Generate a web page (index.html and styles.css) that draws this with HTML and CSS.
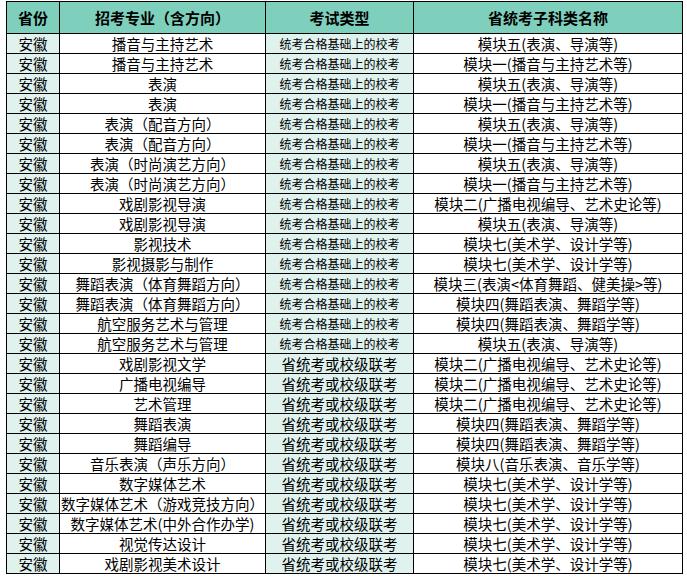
FILE: index.html
```html
<!DOCTYPE html>
<html lang="zh-CN">
<head>
<meta charset="utf-8">
<title>安徽 艺术类专业 省统考子科类</title>
<link rel="stylesheet" href="styles.css">
</head>
<body>
<div class="page">
<table class="grid">
  <colgroup>
    <col class="c-prov">
    <col class="c-major">
    <col class="c-type">
    <col class="c-cat">
  </colgroup>
  <thead>
    <tr><th>省份</th><th>招考专业（含方向）</th><th>考试类型</th><th>省统考子科类名称</th></tr>
  </thead>
  <tbody>
    <tr><td class="prov">安徽</td><td>播音与主持艺术</td><td class="type sm">统考合格基础上的校考</td><td>模块五(表演、导演等)</td></tr>
    <tr><td class="prov">安徽</td><td>播音与主持艺术</td><td class="type sm">统考合格基础上的校考</td><td>模块一(播音与主持艺术等)</td></tr>
    <tr><td class="prov">安徽</td><td>表演</td><td class="type sm">统考合格基础上的校考</td><td>模块五(表演、导演等)</td></tr>
    <tr><td class="prov">安徽</td><td>表演</td><td class="type sm">统考合格基础上的校考</td><td>模块一(播音与主持艺术等)</td></tr>
    <tr><td class="prov">安徽</td><td>表演（配音方向）</td><td class="type sm">统考合格基础上的校考</td><td>模块五(表演、导演等)</td></tr>
    <tr><td class="prov">安徽</td><td>表演（配音方向）</td><td class="type sm">统考合格基础上的校考</td><td>模块一(播音与主持艺术等)</td></tr>
    <tr><td class="prov">安徽</td><td>表演（时尚演艺方向）</td><td class="type sm">统考合格基础上的校考</td><td>模块五(表演、导演等)</td></tr>
    <tr><td class="prov">安徽</td><td>表演（时尚演艺方向）</td><td class="type sm">统考合格基础上的校考</td><td>模块一(播音与主持艺术等)</td></tr>
    <tr><td class="prov">安徽</td><td>戏剧影视导演</td><td class="type sm">统考合格基础上的校考</td><td>模块二(广播电视编导、艺术史论等)</td></tr>
    <tr><td class="prov">安徽</td><td>戏剧影视导演</td><td class="type sm">统考合格基础上的校考</td><td>模块五(表演、导演等)</td></tr>
    <tr><td class="prov">安徽</td><td>影视技术</td><td class="type sm">统考合格基础上的校考</td><td>模块七(美术学、设计学等)</td></tr>
    <tr><td class="prov">安徽</td><td>影视摄影与制作</td><td class="type sm">统考合格基础上的校考</td><td>模块七(美术学、设计学等)</td></tr>
    <tr><td class="prov">安徽</td><td>舞蹈表演（体育舞蹈方向）</td><td class="type sm">统考合格基础上的校考</td><td>模块三(表演&lt;体育舞蹈、健美操&gt;等)</td></tr>
    <tr><td class="prov">安徽</td><td>舞蹈表演（体育舞蹈方向）</td><td class="type sm">统考合格基础上的校考</td><td>模块四(舞蹈表演、舞蹈学等)</td></tr>
    <tr><td class="prov">安徽</td><td>航空服务艺术与管理</td><td class="type sm">统考合格基础上的校考</td><td>模块四(舞蹈表演、舞蹈学等)</td></tr>
    <tr><td class="prov">安徽</td><td>航空服务艺术与管理</td><td class="type sm">统考合格基础上的校考</td><td>模块五(表演、导演等)</td></tr>
    <tr><td class="prov">安徽</td><td>戏剧影视文学</td><td class="type">省统考或校级联考</td><td>模块二(广播电视编导、艺术史论等)</td></tr>
    <tr><td class="prov">安徽</td><td>广播电视编导</td><td class="type">省统考或校级联考</td><td>模块二(广播电视编导、艺术史论等)</td></tr>
    <tr><td class="prov">安徽</td><td>艺术管理</td><td class="type">省统考或校级联考</td><td>模块二(广播电视编导、艺术史论等)</td></tr>
    <tr><td class="prov">安徽</td><td>舞蹈表演</td><td class="type">省统考或校级联考</td><td>模块四(舞蹈表演、舞蹈学等)</td></tr>
    <tr><td class="prov">安徽</td><td>舞蹈编导</td><td class="type">省统考或校级联考</td><td>模块四(舞蹈表演、舞蹈学等)</td></tr>
    <tr><td class="prov">安徽</td><td>音乐表演（声乐方向）</td><td class="type">省统考或校级联考</td><td>模块八(音乐表演、音乐学等)</td></tr>
    <tr><td class="prov">安徽</td><td>数字媒体艺术</td><td class="type">省统考或校级联考</td><td>模块七(美术学、设计学等)</td></tr>
    <tr><td class="prov">安徽</td><td>数字媒体艺术（游戏竞技方向）</td><td class="type">省统考或校级联考</td><td>模块七(美术学、设计学等)</td></tr>
    <tr><td class="prov">安徽</td><td>数字媒体艺术(中外合作办学)</td><td class="type">省统考或校级联考</td><td>模块七(美术学、设计学等)</td></tr>
    <tr><td class="prov">安徽</td><td>视觉传达设计</td><td class="type">省统考或校级联考</td><td>模块七(美术学、设计学等)</td></tr>
    <tr><td class="prov">安徽</td><td>戏剧影视美术设计</td><td class="type">省统考或校级联考</td><td>模块七(美术学、设计学等)</td></tr>
  </tbody>
</table>
</div>
</body>
</html>
```

FILE: styles.css
```css
html, body {
  margin: 0;
  padding: 0;
  background: #ffffff;
}

.page {
  padding: 1px 0 0 6px;
}

.grid {
  border-collapse: collapse;
  table-layout: fixed;
  width: 676px;
  font-family: "Noto Sans CJK SC", "Noto Sans", sans-serif;
  color: #000000;
}

.c-prov { width: 53px; }
.c-major { width: 206px; }
.c-type { width: 148px; }
.c-cat { width: 269px; }

.grid th,
.grid td {
  border: 1px solid #000000;
  padding: 0;
  text-align: center;
  vertical-align: middle;
  white-space: nowrap;
  overflow: visible;
}

.grid th {
  height: 31px;
  background: #7fcfbd;
  font-size: 15px;
  font-weight: 700;
  line-height: 31px;
}

.grid td {
  height: 19px;
  font-size: 14.5px;
  line-height: 19px;
  background: #ffffff;
}

.grid td.prov,
.grid td.type {
  background: #dff2ee;
}

.grid td.sm {
  font-size: 12px;
}
```
